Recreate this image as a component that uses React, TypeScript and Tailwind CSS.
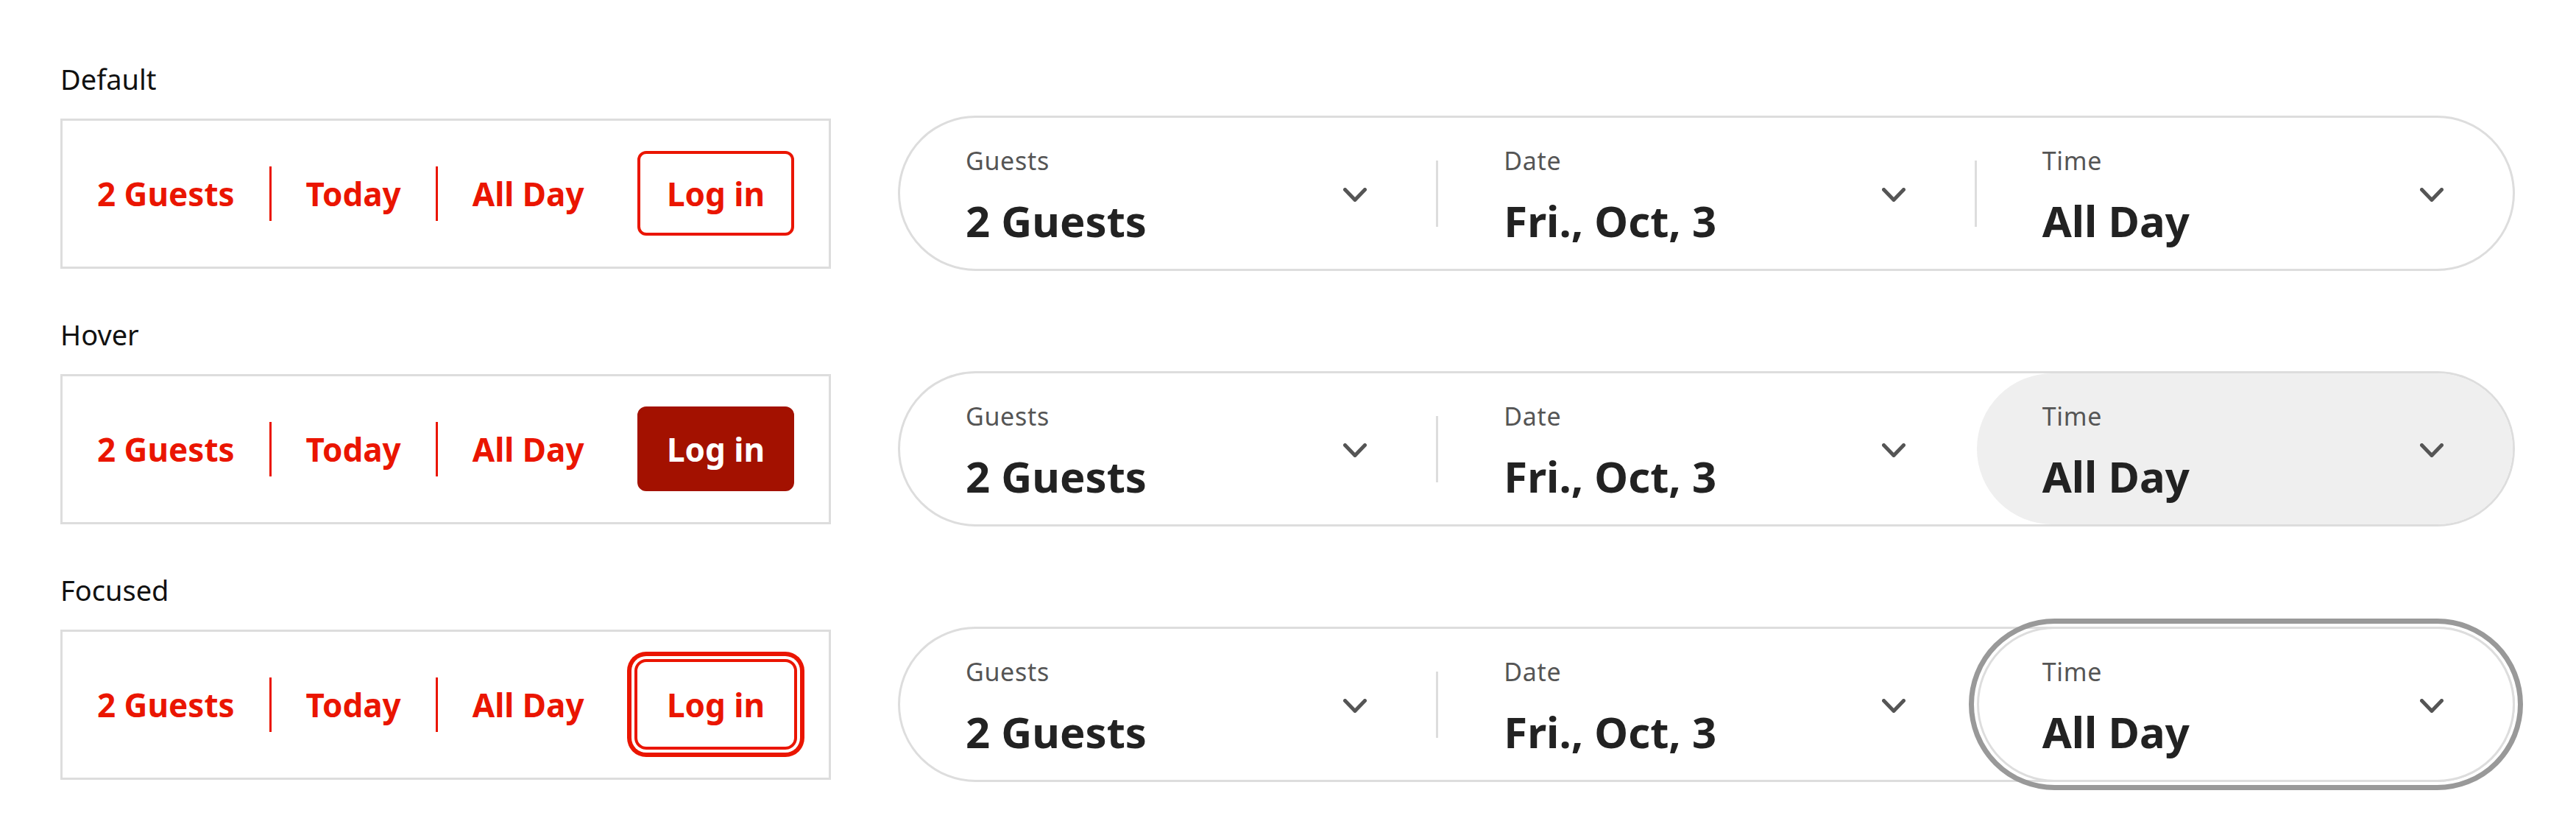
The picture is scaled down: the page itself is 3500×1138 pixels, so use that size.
import React from "react";

type State = "default" | "hover" | "focused";

const rows: { title: string; state: State }[] = [
  { title: "Default", state: "default" },
  { title: "Hover", state: "hover" },
  { title: "Focused", state: "focused" },
];

function Chevron() {
  return (
    <svg width="32" height="19" viewBox="0 0 32 19" fill="none" className="mt-[4px] shrink-0">
      <path
        d="M2.5 2.5 L16 16.5 L29.5 2.5"
        stroke="#555555"
        strokeWidth="5"
        strokeLinecap="round"
        strokeLinejoin="round"
      />
    </svg>
  );
}

function RedDivider() {
  return <span className="mx-[47px] h-[74px] w-[3px] shrink-0 bg-[#ea1500]" />;
}

function CompactBar({ state }: { state: State }) {
  let btn = "border-[#ea1500] bg-white text-[#ea1500]";
  if (state === "hover") btn = "border-[#a31100] bg-[#a31100] text-white";
  if (state === "focused")
    btn =
      "border-white bg-white text-[#ea1500] shadow-[0_0_0_4px_#ea1500,0_0_0_8px_#ffffff,0_0_0_14px_#ea1500]";

  return (
    <div className="flex h-[204px] w-[1047px] shrink-0 items-center border-[3px] border-[#dddddd] bg-white pl-[47px] pr-[47px] text-[44px] font-bold leading-none text-[#ea1500]">
      <span>2 Guests</span>
      <RedDivider />
      <span>Today</span>
      <RedDivider />
      <span>All Day</span>
      <button
        className={`ml-auto flex h-[115px] w-[213px] items-center justify-center rounded-[12px] border-4 text-[44px] font-bold leading-none ${btn}`}
      >
        Log in
      </button>
    </div>
  );
}

function Field({ label, value, state = "default" }: { label: string; value: string; state?: State }) {
  let cls = "pl-[89px] pr-[94px]";
  if (state === "hover") cls = "bg-[#efefef] pl-[89px] pr-[94px]";
  if (state === "focused")
    cls =
      "-my-[3px] -mr-[3px] border-[3px] border-[#dddddd] bg-white pl-[86px] pr-[94px] outline-solid outline-[7px] outline-[#999999] outline-offset-[4px]";

  return (
    <div className={`flex flex-1 items-center justify-between rounded-full ${cls}`}>
      <div className="flex flex-col pt-[8px]">
        <span className="text-[34px] leading-[40px] tracking-[0.02em] text-[#555555]">{label}</span>
        <span className="mt-[27px] text-[58px] font-bold leading-[70px] text-[#222222]">{value}</span>
      </div>
      <Chevron />
    </div>
  );
}

function GreyDivider({ hidden }: { hidden?: boolean }) {
  return (
    <span className={`h-[90px] w-[3px] shrink-0 self-center ${hidden ? "bg-transparent" : "bg-[#dddddd]"}`} />
  );
}

function Pill({ state }: { state: State }) {
  return (
    <div className="flex h-[211px] w-[2197px] shrink-0 rounded-full border-[3px] border-[#dddddd] bg-white">
      <Field label="Guests" value="2 Guests" />
      <GreyDivider />
      <Field label="Date" value="Fri., Oct, 3" />
      <GreyDivider hidden={state !== "default"} />
      <Field label="Time" value="All Day" state={state} />
    </div>
  );
}

export default function App() {
  return (
    <div className="min-h-screen bg-white pl-[82px] pt-[85px] font-['Noto_Sans',sans-serif]">
      <div className="flex flex-col gap-[64px]">
        {rows.map((r) => (
          <section key={r.title}>
            <div className="text-[38px] leading-[44px] text-[#111111]">{r.title}</div>
            <div className="mt-[28px] flex items-center gap-[91px]">
              <CompactBar state={r.state} />
              <Pill state={r.state} />
            </div>
          </section>
        ))}
      </div>
    </div>
  );
}
